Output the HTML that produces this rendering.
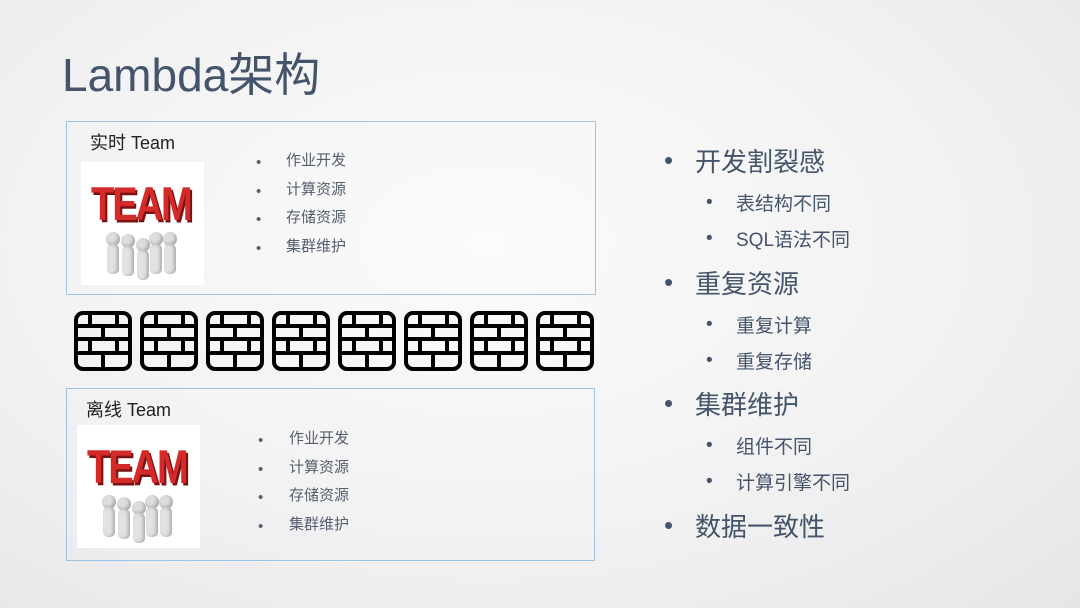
<!DOCTYPE html>
<html><head><meta charset="utf-8"><style>
*{margin:0;padding:0;box-sizing:border-box}
body{width:1080px;height:608px;overflow:hidden;position:relative;background:radial-gradient(ellipse at 45% 40%,#fbfbfb 0%,#f2f2f3 55%,#e6e6e8 100%);font-family:"Liberation Sans","Noto Sans CJK SC",sans-serif;color:#44546a}
.a{position:absolute;white-space:nowrap}
.box{position:absolute;border:1px solid #9dc3e6}
.team{position:absolute;background:#fff;overflow:hidden}
.team .t{position:absolute;left:10px;top:22px;font:bold 38px "Liberation Sans",sans-serif;color:#d42a2a;letter-spacing:-2px;transform:scaleY(1.25);text-shadow:2px 2px 0 #7a1010}
.p{position:absolute;width:14px;height:14px;border-radius:50%;background:#ddd;box-shadow:inset -2px -2px 3px #aaa}
.b{position:absolute;width:12px;height:30px;border-radius:5px;background:#e2e2e2;box-shadow:inset -2px 0 3px #aaa}
.li{font-size:15px;color:#555f6d}
</style></head><body>
<div class="a" style="left:62px;top:39px;font-size:46px;color:#44546a">Lambda架构</div>

<div class="box" style="left:66px;top:121px;width:530px;height:174px"></div>
<div class="a" style="left:90px;top:129px;font-size:18px;color:#222">实时 Team</div>
<div class="team" style="left:81px;top:162px;width:123px;height:123px">
<div class="t">TEAM</div>
<div class="p" style="left:25px;top:70px"></div><div class="b" style="left:26px;top:82px"></div>
<div class="p" style="left:40px;top:72px"></div><div class="b" style="left:41px;top:84px"></div>
<div class="p" style="left:55px;top:76px"></div><div class="b" style="left:56px;top:88px"></div>
<div class="p" style="left:68px;top:70px"></div><div class="b" style="left:69px;top:82px"></div>
<div class="p" style="left:82px;top:70px"></div><div class="b" style="left:83px;top:82px"></div>
</div>
<div class="a li" style="left:256px;top:149px;line-height:28.5px">•<br>•<br>•<br>•</div>
<div class="a li" style="left:286px;top:147px;line-height:28.5px">作业开发<br>计算资源<br>存储资源<br>集群维护</div>

<svg class="a" style="left:72px;top:310px" width="526" height="62" viewBox="0 0 526 62">
<defs><g id="w" fill="none" stroke="#000" stroke-width="4">
<rect x="4" y="3" width="54" height="56" rx="7"/>
<path d="M4 16H58M4 29H58M4 43H58M18 3V16M45 3V16M31 16V29M18 29V43M45 29V43M31 43V59"/></g></defs>
<use href="#w" x="0"/><use href="#w" x="66"/><use href="#w" x="132"/><use href="#w" x="198"/>
<use href="#w" x="264"/><use href="#w" x="330"/><use href="#w" x="396"/><use href="#w" x="462"/>
</svg>

<div class="box" style="left:66px;top:388px;width:529px;height:173px"></div>
<div class="a" style="left:86px;top:396px;font-size:18px;color:#222">离线 Team</div>
<div class="team" style="left:77px;top:425px;width:123px;height:123px">
<div class="t">TEAM</div>
<div class="p" style="left:25px;top:70px"></div><div class="b" style="left:26px;top:82px"></div>
<div class="p" style="left:40px;top:72px"></div><div class="b" style="left:41px;top:84px"></div>
<div class="p" style="left:55px;top:76px"></div><div class="b" style="left:56px;top:88px"></div>
<div class="p" style="left:68px;top:70px"></div><div class="b" style="left:69px;top:82px"></div>
<div class="p" style="left:82px;top:70px"></div><div class="b" style="left:83px;top:82px"></div>
</div>
<div class="a li" style="left:258px;top:427px;line-height:28.5px">•<br>•<br>•<br>•</div>
<div class="a li" style="left:289px;top:425px;line-height:28.5px">作业开发<br>计算资源<br>存储资源<br>集群维护</div>

<div class="a" style="left:664px;top:145px;font-size:26px">•</div>
<div class="a" style="left:695px;top:142px;font-size:26px">开发割裂感</div>
<div class="a" style="left:706px;top:192px;font-size:19px">•</div>
<div class="a" style="left:736px;top:189px;font-size:19px">表结构不同</div>
<div class="a" style="left:706px;top:228px;font-size:19px">•</div>
<div class="a" style="left:736px;top:225px;font-size:19px">SQL语法不同</div>
<div class="a" style="left:664px;top:267px;font-size:26px">•</div>
<div class="a" style="left:695px;top:264px;font-size:26px">重复资源</div>
<div class="a" style="left:706px;top:314px;font-size:19px">•</div>
<div class="a" style="left:736px;top:311px;font-size:19px">重复计算</div>
<div class="a" style="left:706px;top:350px;font-size:19px">•</div>
<div class="a" style="left:736px;top:347px;font-size:19px">重复存储</div>
<div class="a" style="left:664px;top:388px;font-size:26px">•</div>
<div class="a" style="left:695px;top:385px;font-size:26px">集群维护</div>
<div class="a" style="left:706px;top:435px;font-size:19px">•</div>
<div class="a" style="left:736px;top:432px;font-size:19px">组件不同</div>
<div class="a" style="left:706px;top:471px;font-size:19px">•</div>
<div class="a" style="left:736px;top:468px;font-size:19px">计算引擎不同</div>
<div class="a" style="left:664px;top:510px;font-size:26px">•</div>
<div class="a" style="left:695px;top:507px;font-size:26px">数据一致性</div>
</body></html>
